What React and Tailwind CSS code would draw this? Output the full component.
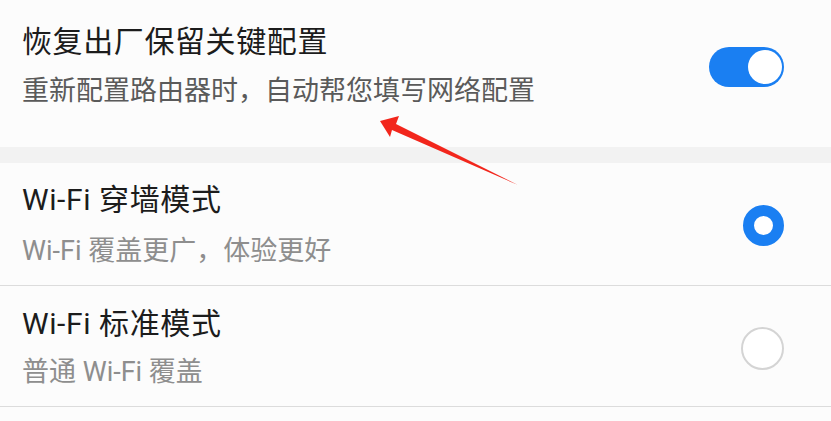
const font = { fontFamily: 'Roboto, "Noto Sans CJK SC", sans-serif' };

const Toggle = () => (
  <div className="flex h-[40px] w-[75px] items-center justify-end rounded-full bg-[#1a7ff2] px-[2px]">
    <div className="h-[34px] w-[34px] rounded-full bg-white" />
  </div>
);

const Radio = ({ checked }) =>
  checked ? (
    <div className="h-[41px] w-[41px] rounded-full border-[11px] border-[#1a7ff2] bg-white" />
  ) : (
    <div className="h-[43px] w-[43px] rounded-full border-2 border-[#d4d4d4] bg-white" />
  );

const Row = ({ title, desc, descColor, control, className, gap }) => (
  <div className={`flex items-center justify-between pl-[22px] pr-[47px] ${className}`}>
    <div className="flex flex-col">
      <div className="text-[30px] leading-[40px] tracking-[0.6px] text-[#1c1c1c]">{title}</div>
      <div className={`text-[27px] leading-[40px] ${descColor} ${gap}`}>{desc}</div>
    </div>
    {control}
  </div>
);

export default function App() {
  return (
    <div className="relative h-[421px] w-[831px] overflow-hidden bg-[#fcfcfc]" style={font}>
      <Row
        title="恢复出厂保留关键配置"
        desc="重新配置路由器时，自动帮您填写网络配置"
        descColor="text-[#5a5a5a]"
        gap="mt-[9px]"
        className="h-[147px] pt-[22px] pb-[36px]"
        control={<Toggle />}
      />
      <div className="h-[16px] bg-[#f2f2f2]" />
      <Row
        title="Wi-Fi 穿墙模式"
        desc="Wi-Fi 覆盖更广，体验更好"
        descColor="text-[#8e8e8e]"
        gap="mt-[11px]"
        className="h-[123px] border-b border-[#dcdcdc] pt-[17px] pb-[14px]"
        control={<Radio checked />}
      />
      <Row
        title="Wi-Fi 标准模式"
        desc="普通 Wi-Fi 覆盖"
        descColor="text-[#8e8e8e]"
        gap="mt-[8px]"
        className="h-[121px] border-b border-[#dcdcdc] pt-[18px] pb-[14px]"
        control={<Radio />}
      />
      <svg
        className="pointer-events-none absolute left-0 top-0"
        width="831"
        height="421"
        viewBox="0 0 831 421"
      >
        <polygon
          points="380,121 399,116 396,124 518,185 392,130 390,137"
          fill="#f2261c"
        />
      </svg>
    </div>
  );
}
